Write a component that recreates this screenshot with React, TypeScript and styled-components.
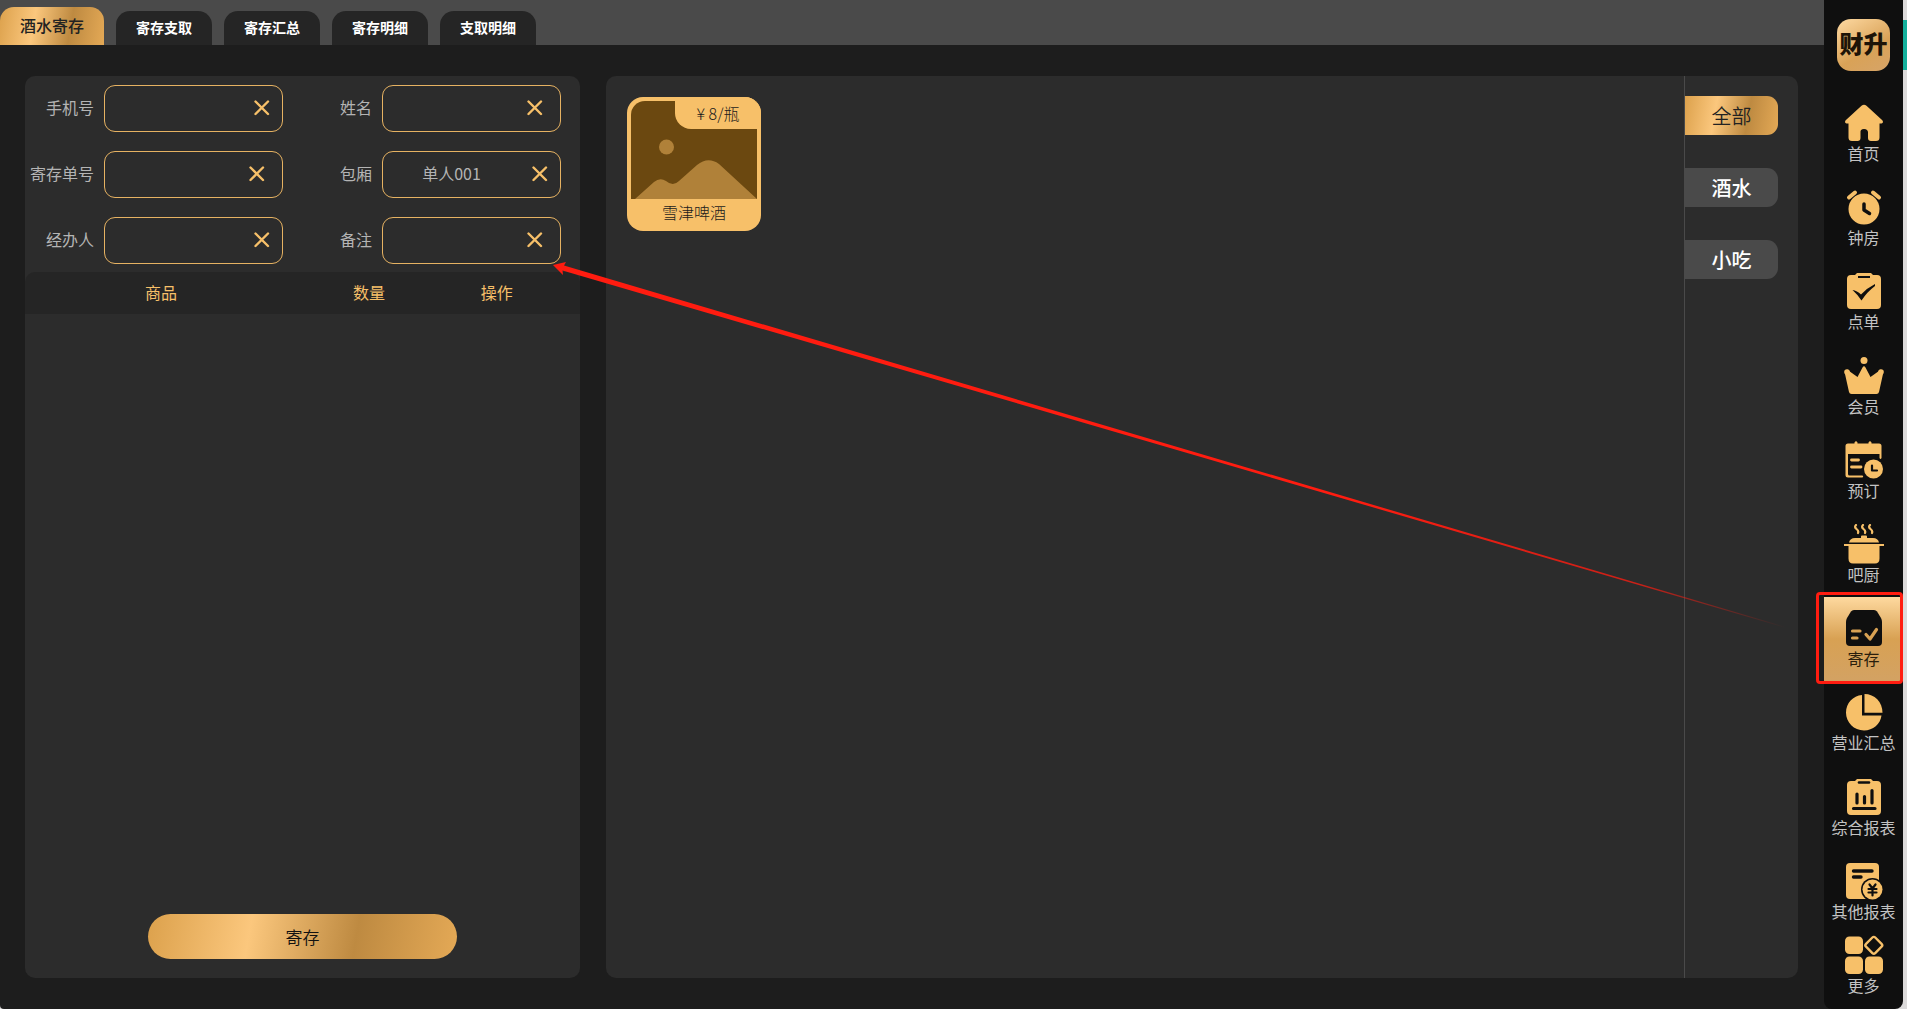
import React, { useState } from "react";
import styled, { createGlobalStyle, css } from "styled-components";

const gold = "#f7c069";
const brushed = "linear-gradient(100deg, #dca14c 0%, #fbc77d 33%, #be8a41 67%, #e4a956 100%)";

const GlobalStyle = createGlobalStyle`
  * { box-sizing: border-box; }
  body { margin: 0; background: #dcdada; }
  body, button, input { font-family: "Noto Sans CJK SC", "Noto Sans", sans-serif; }
  button, input { margin: 0; padding: 0; border: 0; background: none; color: inherit; }
  button { cursor: pointer; }
`;

const Screen = styled.div`
  position: relative;
  display: flex;
  min-height: 100vh;
  padding-right: 4px;
  overflow: hidden;
`;

const ScrollMark = styled.div`
  position: absolute;
  right: 0;
  top: 20px;
  width: 4px;
  height: 50px;
  background: #14b09c;
`;

const Main = styled.main`
  flex: 1;
  min-width: 0;
  display: flex;
  flex-direction: column;
  background: #1d1d1d;
  border-bottom-left-radius: 4px;
  box-shadow: 8px 0 0 #1d1d1d;
`;

const TabBar = styled.nav`
  display: flex;
  align-items: flex-end;
  gap: 12px;
  height: 45px;
  background: #4a4a4a;
`;

const Tab = styled.button<{ $active: boolean }>`
  width: 96px;
  height: 34px;
  border-radius: 14px 14px 0 0;
  background: #252525;
  color: #fff;
  font-size: 14px;
  font-weight: 700;
  line-height: 20px;
  padding-bottom: 2px;
  ${(p) =>
    p.$active &&
    css`
      width: 104px;
      height: 38px;
      background: ${brushed};
      color: #222;
      font-size: 16px;
      font-weight: 500;
    `}
`;

const Workspace = styled.div`
  flex: 1;
  display: flex;
  gap: 26px;
  padding: 31px 26px 31px 25px;
`;

const Panel = styled.section`
  display: flex;
  border-radius: 10px;
  background: #2c2c2c;
`;

const DepositPanel = styled(Panel)`
  flex: 0 0 555px;
  flex-direction: column;
`;

const ProductPanel = styled(Panel)`
  flex: 1;
  min-width: 0;
`;

const Form = styled.form`
  display: grid;
  grid-template-columns: 69px 179px 79px 179px;
  column-gap: 10px;
  row-gap: 19px;
  align-items: center;
  padding: 9px 0 8px;
`;

const Label = styled.label`
  color: #b4b4b4;
  font-size: 16px;
  line-height: 24px;
  text-align: right;
  white-space: nowrap;
  padding-bottom: 4px;
  justify-self: end;
`;

const Field = styled.div<{ $end: number }>`
  display: flex;
  align-items: center;
  gap: 12px;
  height: 47px;
  padding: 0 ${(p) => p.$end}px 1px 0;
  border: 1px solid #e6b262;
  border-radius: 11px;
`;

const FieldInput = styled.input`
  flex: 1;
  min-width: 0;
  height: 40px;
  color: #b4b4b4;
  font-size: 16px;
  line-height: 24px;
  text-align: center;
  outline: none;
  padding-bottom: 3px;
`;

const ClearButton = styled.button`
  display: flex;
  width: 16px;
  height: 16px;
`;

const Items = styled.table`
  width: 100%;
  border-spacing: 0;
  table-layout: fixed;
  background: #252525;
  border-radius: 10px 10px 0 0;
`;

const ItemHead = styled.th<{ $w: number }>`
  width: ${(p) => p.$w}%;
  height: 42px;
  padding: 0 0 2px;
  color: ${gold};
  font-size: 16px;
  font-weight: 400;
  line-height: 24px;
`;

const SubmitButton = styled.button`
  align-self: center;
  width: 309px;
  height: 45px;
  margin: auto 0 19px;
  border-radius: 23px;
  background: ${brushed};
  color: #111;
  font-size: 17px;
  line-height: 24px;
  font-weight: 350;
`;

const Products = styled.div`
  flex: 1;
  display: flex;
  flex-wrap: wrap;
  align-content: flex-start;
  gap: 20px;
  padding: 21px;
`;

const Card = styled.button`
  position: relative;
  display: flex;
  flex-direction: column;
  width: 134px;
  height: 134px;
  padding: 4px 4px 0;
  border-radius: 16px;
  background: ${gold};
  overflow: hidden;
`;

const Picture = styled.svg`
  display: block;
  width: 100%;
  height: 98px;
  border-radius: 14px 0 0 0;
`;

const Price = styled.span`
  position: absolute;
  top: 0;
  right: 0;
  width: 86px;
  height: 32px;
  border-bottom-left-radius: 16px;
  background: ${gold};
  color: #1c1c1c;
  font-size: 16px;
  font-weight: 300;
  line-height: 32px;
`;

const CardName = styled.span`
  width: 100%;
  color: #1c1c1c;
  font-size: 16px;
  font-weight: 300;
  line-height: 26px;
`;

const Categories = styled.div`
  display: flex;
  flex-direction: column;
  align-items: flex-start;
  gap: 33px;
  width: 114px;
  padding-top: 20px;
  border-left: 1px solid #4a4a4a;
`;

const Category = styled.button<{ $active: boolean }>`
  width: 93px;
  height: 39px;
  padding-top: 1px;
  border-radius: 0 11px 11px 0;
  background: ${(p) => (p.$active ? brushed : "#4a4a4a")};
  color: ${(p) => (p.$active ? "#222" : "#fff")};
  font-size: 20px;
  font-weight: ${(p) => (p.$active ? 350 : 500)};
  line-height: 30px;
`;

const Sidebar = styled.aside`
  flex: 0 0 79px;
  display: flex;
  flex-direction: column;
  align-items: center;
  background: #0f0f0f;
  border-radius: 0 0 8px 8px;
`;

const Logo = styled.div`
  display: flex;
  align-items: center;
  justify-content: center;
  width: 53px;
  height: 52px;
  margin: 19px 0 21px;
  padding-bottom: 4px;
  border-radius: 14px;
  background: linear-gradient(150deg, #fdd9a2 0%, #d9a257 60%, #d6a468 100%);
  color: #1d1408;
  font-size: 24px;
  font-weight: 900;
  line-height: 30px;
  white-space: nowrap;
`;

const NavList = styled.nav`
  flex: 1;
  align-self: stretch;
  display: flex;
  flex-direction: column;
`;

const NavItem = styled.button<{ $active?: boolean; $compact?: boolean }>`
  position: relative;
  flex: ${(p) => (p.$compact ? "0 0 75px" : "1")};
  width: 100%;
  display: flex;
  flex-direction: column;
  align-items: center;
  padding-top: ${(p) => (p.$compact ? 1 : 11)}px;
  color: ${(p) => (p.$active ? "#2a1e0c" : "#c3c3c3")};
  background: ${(p) => (p.$active ? "linear-gradient(#fed99f 0%, #d8a153 50%, #d3a263 100%)" : "none")};
  font-size: 16px;
  line-height: 20px;
  white-space: nowrap;
`;

const NavIcon = styled.svg<{ $active?: boolean }>`
  display: block;
  width: 40px;
  height: 40px;
  color: ${(p) => (p.$active ? "#0f0f0f" : gold)};
  --hole: ${(p) => (p.$active ? "#d8a153" : "#0f0f0f")};
`;

const Highlight = styled.span`
  position: absolute;
  inset: -5px 0 -3px -8px;
  border: 3px solid #ff1c10;
  border-radius: 4px;
  pointer-events: none;
`;

const Arrow = styled.svg`
  position: absolute;
  left: 553px;
  top: 260px;
  width: 1234px;
  height: 370px;
  pointer-events: none;
`;

const line = { fill: "none", strokeLinecap: "round", strokeLinejoin: "round" } as const;
const hole = "var(--hole)";

const icons: Record<string, React.ReactNode> = {
  home: (
    <path
      fill="currentColor"
      d="M17.500 2.800Q20 .8 22.500 2.800L38.300 17.300Q40 19.500 37.500 20.500H35.500V34.500Q35.500 38 32 38H27Q24 38 24 35V29.500Q24 26 20 26T16.500 29.500V35Q16.500 38 13.500 38H8Q4.500 38 4.500 34.500V20.500H2.500Q0 19.500 1.700 17.300Z"
    />
  ),
  clock: (
    <>
      <circle cx="20" cy="22" r="15.500" fill="currentColor" />
      <path {...line} stroke="currentColor" strokeWidth="4" d="M5 10.500L11 5.500M35 10.500L29 5.500" />
      <path {...line} stroke={hole} strokeWidth="3.500" d="M20 17V23L25.500 26.500" />
    </>
  ),
  order: (
    <>
      <path fill="currentColor" d="M13 2H27L29 4H33Q37 4 37 8V34Q37 38 33 38H7Q3 38 3 34V8Q3 4 7 4H11Z" />
      <path fill={hole} d="M14 5H26V7H14ZM8.500 19Q13 19.500 17 23.500Q23 17 31 13V15Q23 21 17.500 29.500Q14 24 8.500 19Z" />
    </>
  ),
  crown: (
    <>
      <circle cx="20" cy="4.500" r="3.500" fill="currentColor" />
      <circle cx="3" cy="16" r="2.800" fill="currentColor" />
      <circle cx="37" cy="16" r="2.800" fill="currentColor" />
      <path
        fill="currentColor"
        d="M3 13.500L13.500 21L18.500 11.500Q20 9 21.500 11.500L26.500 21L37 13.500L39 18L35 36Q34.500 38 32.500 38H7.500Q5.500 38 5 36L1 18Z"
      />
    </>
  ),
  booking: (
    <>
      <path
        fill="currentColor"
        d="M4 3.500H10.500V2.500Q12 0 13.500 2.500V3.500H24.500V2.500Q26 0 27.500 2.500V3.500H35Q37.500 3.500 37.500 6V18Q36.500 20 35.500 18V14H4V34Q4 35.500 5.500 35.500H18.500Q20 36.500 18.500 37.500H4Q1.500 37.500 1.500 35V6Q1.500 3.500 4 3.500Z"
      />
      <path {...line} stroke="currentColor" strokeWidth="2.800" d="M7.500 20H14.500M7.500 27H17" />
      <circle cx="29.500" cy="29" r="9.500" fill="currentColor" />
      <path {...line} stroke={hole} strokeWidth="2.200" d="M28 25.500V30.500H33" />
    </>
  ),
  pot: (
    <>
      <path
        {...line}
        stroke="currentColor"
        strokeWidth="2.200"
        d="M12 1Q10 3 12.500 5T14 9M19 1Q17 3 19.500 5T21 9M26 1Q24 3 26.500 5T28 9"
      />
      <path fill="currentColor" d="M5 18.500Q6 14 11 14H17V12.500Q17 11.500 18 11.500H22Q23 11.500 23 12.500V14H29Q34 14 35 18.500Z" />
      <path fill="currentColor" d="M0 20H40V22H35.500V34.500Q35.500 39.500 31 39.500H9Q4.500 39.500 4.500 34.500V22H0Z" />
    </>
  ),
  deposit: (
    <>
      <path fill="currentColor" d="M10 2H30Q32 2 33 3.500L37 10Q38 12 38 14V34Q38 38 34 38H6Q2 38 2 34V14Q2 12 3 10L7 3.500Q8 2 10 2Z" />
      <path {...line} stroke={hole} strokeWidth="3.200" d="M8.500 23H16M8.500 30H13M22 26.500L26 31L32.500 21.500" />
    </>
  ),
  pie: (
    <>
      <path fill="currentColor" d="M18 3V23.500H37.500C36.500 32 29 38.500 20 38.500C10 38.500 2 30.500 2 20.800C2 11 9 3.800 18 3Z" />
      <path fill="currentColor" d="M20.500 2C30.500 2 38.500 10 38.500 20.800H20.500Z" />
    </>
  ),
  report: (
    <>
      <path fill="currentColor" d="M13 2H27L29 4H33Q37 4 37 8V34Q37 38 33 38H7Q3 38 3 34V8Q3 4 7 4H11Z" />
      <path {...line} stroke={hole} strokeWidth="2.600" d="M15 5.500H25" />
      <path {...line} stroke={hole} strokeWidth="3.200" d="M13 17V26M20.500 19.500V26M28 13.500V26M9.500 31.500H31" />
    </>
  ),
  other: (
    <>
      <rect x="2" y="2" width="33" height="36" rx="4" fill="currentColor" />
      <path {...line} stroke={hole} strokeWidth="3.400" d="M9.500 10H28M9.500 16H17" />
      <circle cx="28.500" cy="28.500" r="11.500" fill={hole} />
      <circle cx="28.500" cy="28.500" r="10" fill="currentColor" />
      <path {...line} stroke={hole} strokeWidth="2.200" d="M25.500 23.500L28.500 27.500L31.500 23.500M24.500 28H32.500M24.500 31.500H32.500M28.500 28V34.500" />
    </>
  ),
  more: (
    <>
      <rect x="1" y="1.500" width="18" height="17.500" rx="4.500" fill="currentColor" />
      <rect x="1" y="21.500" width="18" height="17.500" rx="4.500" fill="currentColor" />
      <rect x="21" y="21.500" width="18" height="17.500" rx="4.500" fill="currentColor" />
      <rect x="23.300" y="3.800" width="13" height="13" rx="2" transform="rotate(45 29.800 10.300)" fill="none" stroke="currentColor" strokeWidth="2.400" />
    </>
  ),
};

const tabs = ["酒水寄存", "寄存支取", "寄存汇总", "寄存明细", "支取明细"];
const categories = ["全部", "酒水", "小吃"];
const fields = [
  { id: "phone", label: "手机号", value: "", end: 12 },
  { id: "name", label: "姓名", value: "", end: 17 },
  { id: "slip", label: "寄存单号", value: "", end: 17 },
  { id: "room", label: "包厢", value: "单人001", end: 12 },
  { id: "handler", label: "经办人", value: "", end: 12 },
  { id: "remark", label: "备注", value: "", end: 17 },
];
const nav = [
  ["home", "首页"],
  ["clock", "钟房"],
  ["order", "点单"],
  ["crown", "会员"],
  ["booking", "预订"],
  ["pot", "吧厨"],
  ["deposit", "寄存"],
  ["pie", "营业汇总"],
  ["report", "综合报表"],
  ["other", "其他报表"],
];

export default function App() {
  const [tab, setTab] = useState(tabs[0]);
  const [category, setCategory] = useState(categories[0]);
  const [values, setValues] = useState<Record<string, string>>(
    Object.fromEntries(fields.map((f) => [f.id, f.value]))
  );
  const update = (id: string, value: string) => setValues((v) => ({ ...v, [id]: value }));

  return (
    <>
      <GlobalStyle />
      <Screen>
        <Main>
          <TabBar>
            {tabs.map((t) => (
              <Tab key={t} $active={t === tab} onClick={() => setTab(t)}>
                {t}
              </Tab>
            ))}
          </TabBar>
          <Workspace>
            <DepositPanel>
              <Form>
                {fields.map((f) => (
                  <React.Fragment key={f.id}>
                    <Label htmlFor={f.id}>{f.label}</Label>
                    <Field $end={f.end}>
                      <FieldInput id={f.id} value={values[f.id]} onChange={(e) => update(f.id, e.target.value)} />
                      <ClearButton type="button" aria-label={`清除${f.label}`} onClick={() => update(f.id, "")}>
                        <svg width="16" height="16" viewBox="0 0 16 16">
                          <path d="M1.500 1.500L14 14M14 1.500L1.500 14" stroke={gold} strokeWidth="2.400" strokeLinecap="round" />
                        </svg>
                      </ClearButton>
                    </Field>
                  </React.Fragment>
                ))}
              </Form>
              <Items>
                <thead>
                  <tr>
                    <ItemHead $w={49}>商品</ItemHead>
                    <ItemHead $w={26}>数量</ItemHead>
                    <ItemHead $w={20}>操作</ItemHead>
                    <ItemHead as="td" $w={5} />
                  </tr>
                </thead>
              </Items>
              <SubmitButton>寄存</SubmitButton>
            </DepositPanel>
            <ProductPanel>
              <Products>
                <Card>
                  <Picture viewBox="0 0 126 98" preserveAspectRatio="none">
                    <rect width="126" height="98" fill="#6b4810" />
                    <circle cx="35.500" cy="46" r="7.500" fill="#b08139" />
                    <path
                      fill="#b08139"
                      d="M4 98L23 81Q29 76 35 80Q42 86 48 80L66 64Q77 55 88 63L126 98Z"
                    />
                  </Picture>
                  <Price>¥ 8/瓶</Price>
                  <CardName>雪津啤酒</CardName>
                </Card>
              </Products>
              <Categories>
                {categories.map((c) => (
                  <Category key={c} $active={c === category} onClick={() => setCategory(c)}>
                    {c}
                  </Category>
                ))}
              </Categories>
            </ProductPanel>
          </Workspace>
        </Main>
        <Sidebar>
          <Logo>财升</Logo>
          <NavList>
            {nav.map(([icon, label]) => (
              <NavItem key={icon} $active={icon === "deposit"}>
                <NavIcon viewBox="0 0 40 40" $active={icon === "deposit"}>
                  {icons[icon]}
                </NavIcon>
                {label}
                {icon === "deposit" && <Highlight />}
              </NavItem>
            ))}
          </NavList>
          <NavItem $compact>
            <NavIcon viewBox="0 0 40 40">{icons.more}</NavIcon>
            更多
          </NavItem>
        </Sidebar>
        <ScrollMark />
        <Arrow viewBox="0 0 1234 370">
          <defs>
            <linearGradient id="fade" x1="0" x2="1">
              <stop offset="0.650" stopColor="#ff1c10" />
              <stop offset="0.880" stopColor="#ff1c10" stopOpacity="0.750" />
              <stop offset="1" stopColor="#ff1c10" stopOpacity="0" />
            </linearGradient>
          </defs>
          <path fill="url(#fade)" d="M0 5L13 2L11 5.500L1233 367L1233 368L9.500 10.500L10 15Z" />
        </Arrow>
      </Screen>
    </>
  );
}
